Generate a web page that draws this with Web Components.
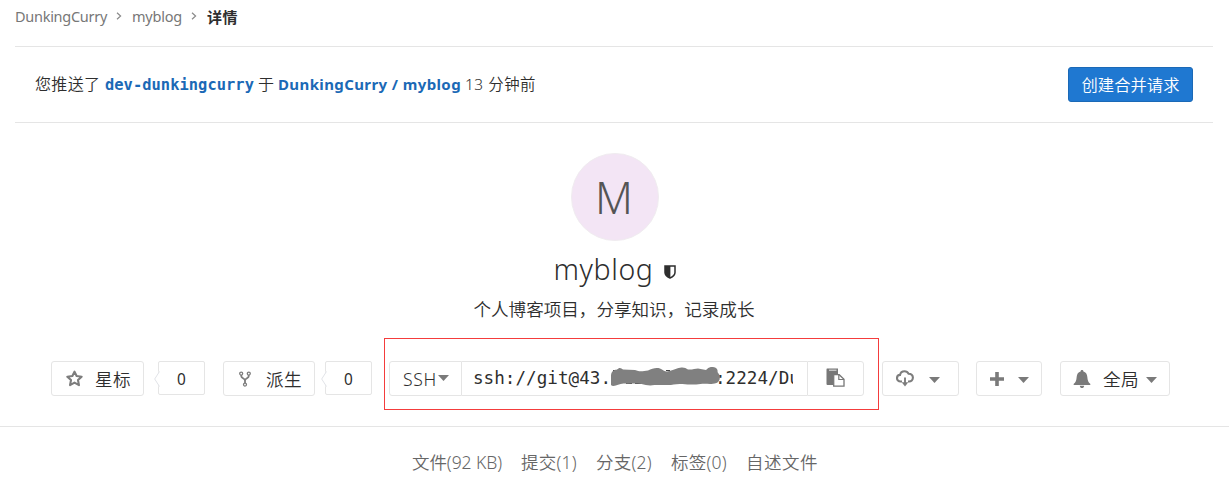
<!DOCTYPE html>
<html lang="zh-CN">
<head>
<meta charset="utf-8">
<title>DunkingCurry / myblog</title>
<style>
body{margin:0;width:1229px;height:500px;overflow:hidden;background:#fff;color:#2e2e2e;font-family:"Noto Sans","Noto Sans CJK SC",sans-serif;font-size:15px}
</style>
</head>
<body>
<project-page></project-page>
<script>
// Text fitted to a given advance width (w) through letter spacing.
class FitText extends HTMLElement{
  connectedCallback(){
    const r=this.attachShadow({mode:'open'});
    r.innerHTML='<style>:host{display:inline-block;white-space:pre;flex:none}</style><span><slot></slot></span>';
    const w=+this.getAttribute('w');
    if(!w)return;
    this.style.width=w+'px';
    const s=r.querySelector('span');
    const n=[...this.textContent].length;
    s.style.letterSpacing=((w-s.getBoundingClientRect().width)/n).toFixed(3)+'px';
  }
}
const icons={
  chevron:['0 0 6 8','<path d="M1 .7 4.6 4 1 7.3" fill="none" stroke="#8a8a8a" stroke-width="1.2"/>'],
  caret:['0 0 11 6','<path d="M0 0h11L5.5 6z" fill="#7a7a7a"/>'],
  star:['0 0 16 16','<path d="m8 1.5 2 4.2 4.7.6-3.4 3.2.9 4.7L8 11.9l-4.2 2.3.9-4.7L1.300 6.300 6 5.700z" fill="none" stroke="#7d7d7d" stroke-width="2" stroke-linejoin="round"/>'],
  fork:['0 0 12 16','<g fill="none" stroke="#7d7d7d"><circle cx="2.200" cy="2.600" r="1.500" stroke-width="1.300"/><circle cx="9.800" cy="2.600" r="1.500" stroke-width="1.300"/><circle cx="6" cy="13.600" r="1.500" stroke-width="1.300"/><path d="M2.300 4v1.200c0 2 3.700 2 3.700 4.300V12M9.700 4v1.200c0 2-3.700 2-3.700 4.300" stroke-width="1.800"/></g>'],
  shield:['0 0 12 14','<path d="M1 1h10v6.500c0 2.500-2.500 4.400-5 5.500-2.500-1.100-5-3-5-5.500z" fill="#fff" stroke="#2e2e2e" stroke-width="1.500"/><path d="M1 1h5.400v12C3.500 11.900 1 10 1 7.500z" fill="#2e2e2e"/>'],
  paste:['0 0 19 19','<path d="M1 .5H12v6H7V17H1.500Q.5 17 .5 16V1.500Q.5.500 1 .5z" fill="#777"/><path d="M3 2.200h7.500" stroke="#ddd" stroke-width="1.100"/><path d="M7.700 6.700h5.500l4.800 4.500v6.900H7.700z" fill="#fff" stroke="#777" stroke-width="1.300"/><path d="M12.800 6.800v4.700H18" fill="none" stroke="#777" stroke-width="1.200"/>'],
  cloud:['0 0 18 17','<path d="M6 11.500H4.500C2.400 11.500 1 10 1 8.200S2.300 5 4 4.900C4.500 2.700 6.300 1.300 8.500 1.300c1.900 0 3.300.9 4.100 2.400 2.500-.1 4.300 1.600 4.300 3.900s-1.700 3.900-3.900 3.900h-1" fill="none" stroke="#7d7d7d" stroke-width="2.100"/><path d="M9 7.500V13" stroke="#7d7d7d" stroke-width="1.900"/><path d="M5.700 12.200h6.600L9 16.600z" fill="#7d7d7d"/>'],
  plus:['0 0 14 14','<path d="M5.200 0h3.600v5.200H14v3.600H8.800V14H5.200V8.800H0V5.200h5.200z" fill="#7a7a7a"/>'],
  bell:['0 0 18 18','<path d="M9 0c1 0 1.400.6 1.400 1.400 2.400.6 3.700 2.600 3.900 5.300.2 4 1.200 5.600 2.900 7 .5.900.1 1.300-.7 1.300H1.500c-.8 0-1.200-.4-.7-1.300 1.700-1.400 2.700-3 2.900-7 .2-2.700 1.500-4.700 3.900-5.300C7.600.6 8 0 9 0zM6.800 15.700h4.400C11 17.200 10.200 18 9 18s-2-.8-2.200-2.300z" fill="#7a7a7a"/>']
};
class UiIcon extends HTMLElement{
  connectedCallback(){
    const [box,body]=icons[this.getAttribute('name')];
    const b=box.split(' ');
    const w=this.getAttribute('width')||b[2];
    const h=this.getAttribute('height')||b[3];
    this.attachShadow({mode:'open'}).innerHTML=`<style>:host{display:block;flex:none}svg{display:block}</style><svg width="${w}" height="${h}" viewBox="${box}" preserveAspectRatio="none">${body}</svg>`;
  }
}
const define=(name,html)=>customElements.define(name,class extends HTMLElement{
  constructor(){
    super();
    const t=document.createElement('template');
    t.innerHTML=html;
    this.attachShadow({mode:'open'}).append(t.content.cloneNode(true));
  }
});
customElements.define('fit-text',FitText);
customElements.define('ui-icon',UiIcon);

define('crumb-bar',`<style>
:host{display:flex;box-sizing:border-box;height:47px;margin:0 16px 0 15px;padding-bottom:14px;border-bottom:1px solid #e5e5e5;align-items:center;color:#777;font-size:14.5px}
ui-icon{margin:0 11px 0 9px}b{color:#2e2e2e;font-size:15px}
</style><fit-text w="92">DunkingCurry</fit-text><ui-icon name="chevron" style="margin-right:10px"></ui-icon><fit-text w="50">myblog</fit-text><ui-icon name="chevron" style="margin-right:10px"></ui-icon><b><fit-text w="31">详情</fit-text></b>`);

define('push-notice',`<style>
:host{display:flex;box-sizing:border-box;height:76px;margin:0 16px 0 15px;padding:0 20px;border-bottom:1px solid #e5e5e5;align-items:center}
a{color:#1b69b6;font-weight:700;padding-bottom:1px}.code{font-family:"DejaVu Sans Mono",monospace;font-size:15.4px;padding:0}
.cjk{font-weight:350;font-size:16px;padding-bottom:3px}
button{margin:0 0 0 auto;box-sizing:border-box;width:125px;height:35px;padding:0 0 2px;border:1px solid #1b69b6;border-radius:3px;background:#1f78d1;color:#fff;font:350 16.3px "Noto Sans","Noto Sans CJK SC",sans-serif}
</style><fit-text class="cjk" w="70">您推送了 </fit-text><a class="code"><fit-text w="149">dev-dunkingcurry</fit-text></a><fit-text class="cjk" style="margin-left:4px" w="20">于 </fit-text><a><fit-text w="183">DunkingCurry / myblog</fit-text></a><fit-text class="cjk" style="margin-left:4px;font-size:15.4px" w="71">13 分钟前</fit-text><button><fit-text w="98">创建合并请求</fit-text></button>`);

define('project-head',`<style>
:host{display:flex;flex-direction:column;align-items:center;height:238px;padding-top:30px;box-sizing:border-box}
.avatar{width:88px;height:88px;box-sizing:border-box;border:1px solid #f0ecf0;border-radius:50%;background:#f3e5f5;display:flex;align-items:center;justify-content:center;color:#555;font-size:43.5px;font-weight:350;line-height:1;padding:1px 1px 0 0}
.name{display:flex;align-items:center;height:40px;margin-top:8px;font-size:28.500px;font-weight:300;gap:10px;line-height:40px}
.name ui-icon{margin-top:5px}
.desc{font-size:17.6px;font-weight:350;height:26px;line-height:26px;margin:7px 1px 0 0}
</style><div class="avatar">M</div><div class="name"><fit-text w="100">myblog</fit-text><ui-icon name="shield"></ui-icon></div><div class="desc"><fit-text w="281">个人博客项目，分享知识，记录成长</fit-text></div>`);

define('action-button',`<style>
:host{display:flex;box-sizing:border-box;height:35px;align-items:center;border:1px solid #e5e5e5;border-radius:3px;background:#fff;font-size:17.6px;font-weight:350;flex:none}
</style><slot></slot>`);

define('count-badge',`<style>
:host{display:flex;box-sizing:border-box;position:relative;width:47px;height:34px;align-items:center;justify-content:center;border:1px solid #e5e5e5;border-radius:2px;font-size:15.4px;padding-top:2px;align-self:flex-start;flex:none}
svg{position:absolute;left:-5px;top:9px}
</style><slot></slot><svg width="6" height="16" viewBox="0 0 6 16"><path d="M5.500 0v16" stroke="#fff" stroke-width="1.500"/><path d="M5.500.5.700 8l4.800 7.500" fill="#fff" stroke="#e1e3e8"/></svg>`);

define('clone-panel',`<style>
:host{display:flex;position:relative;width:475px;height:35px;flex:none;margin:0 18px 0 17px}
:host>*{flex:none}
.url{display:flex;box-sizing:border-box;width:345px;border:solid #e5e5e5;border-width:1px 0;padding:0 14px 0 11px;position:relative;align-items:center;font:17.6px/34px "DejaVu Sans Mono",monospace}
.text{display:flex;overflow:hidden;width:321px;margin-top:-2px}.gap{width:104px;flex:none}
.url svg{position:absolute;left:149px;top:5px}
.mark{position:absolute;left:-5px;top:-23px;box-sizing:border-box;width:495px;height:72px;border:1px solid #f43c3c;pointer-events:none}
</style><action-button style="width:73px;padding-left:13px;border-radius:3px 0 0 3px"><fit-text w="34">SSH</fit-text><ui-icon name="caret" style="margin-left:1px;margin-top:-1px"></ui-icon></action-button>
<div class="url"><div class="text"><fit-text w="138">ssh://git@43.</fit-text><span class="gap"></span><fit-text w="85">:2224/Du</fit-text></div>
<svg width="110" height="20" viewBox="0 0 110 20"><path d="M2 3.500h4M15 16.500h6M24 16.500h6M55 3.500h4" stroke="#444" stroke-width="1"/><path d="M.5 6C2 3 4 3 6 2.500 8 .3 10 .5 12 2.500L24 3c5 2 8 1 13 .5 4-2 8-3 12-2 3 1 4 3 7 3 5-1 7-2 10-3 6-2 8-1 11 1 4 .5 7-1 10-1l8 1.500C97 1 99-.500 102 0c4 .5 5 3 4.500 5l2 3c1 4-.5 7-3 8-7 2-10 0-16 1-7 1-12 .5-18 0-7-.5-9 1-15 1-5 .2-9 0-13 0-5 1-9 0-13-1-7-1-12 0-18-.5-4 .5-7 2-10 2.500-3-.3-3.500-2-2.500-4C-.500 11-.300 9 .5 6z" fill="#808080"/></svg></div>
<action-button style="width:57px;padding-left:18px;border-radius:0 3px 3px 0"><ui-icon name="paste" style="margin-top:-2px"></ui-icon></action-button><div class="mark"></div>`);

define('action-row',`<style>
:host{display:flex;height:66px;box-sizing:border-box;padding-left:51px;border-bottom:1px solid #e5e5e5;align-items:flex-start}
</style>
<action-button style="width:93px;padding-left:14px"><ui-icon name="star" width="17" height="17"></ui-icon><fit-text style="margin-left:12px" w="36">星标</fit-text></action-button>
<count-badge style="margin-left:14px">0</count-badge>
<action-button style="width:92px;padding-left:15px;margin-left:18px"><ui-icon name="fork"></ui-icon><fit-text style="margin-left:15px" w="36">派生</fit-text></action-button>
<count-badge style="margin-left:10px">0</count-badge>
<clone-panel></clone-panel>
<action-button style="width:77px;padding-left:13px"><ui-icon name="cloud"></ui-icon><ui-icon style="margin:3px 0 0 15px" name="caret"></ui-icon></action-button>
<action-button style="width:66px;padding-left:13px;margin-left:17px"><ui-icon name="plus"></ui-icon><ui-icon style="margin:3px 0 0 14px" name="caret"></ui-icon></action-button>
<action-button style="width:110px;padding-left:12px;margin-left:18px"><ui-icon name="bell" style="margin-top:1px"></ui-icon><fit-text style="margin-left:12px" w="36">全局</fit-text><ui-icon style="margin:3px 0 0 7px" name="caret"></ui-icon></action-button>`);

define('project-stats',`<style>
:host{display:flex;box-sizing:border-box;height:73px;padding:0 0 5px 412px;align-items:center;color:#666;font-size:17.5px;font-weight:350}
fit-text+fit-text{margin-left:19px}
</style><fit-text w="90">文件(92 KB)</fit-text><fit-text w="56">提交(1)</fit-text><fit-text w="56">分支(2)</fit-text><fit-text w="56">标签(0)</fit-text><fit-text w="72">自述文件</fit-text>`);

define('project-page',`<style>:host{display:block}</style><crumb-bar></crumb-bar><push-notice></push-notice><project-head></project-head><action-row></action-row><project-stats></project-stats>`);
</script>
</body>
</html>
